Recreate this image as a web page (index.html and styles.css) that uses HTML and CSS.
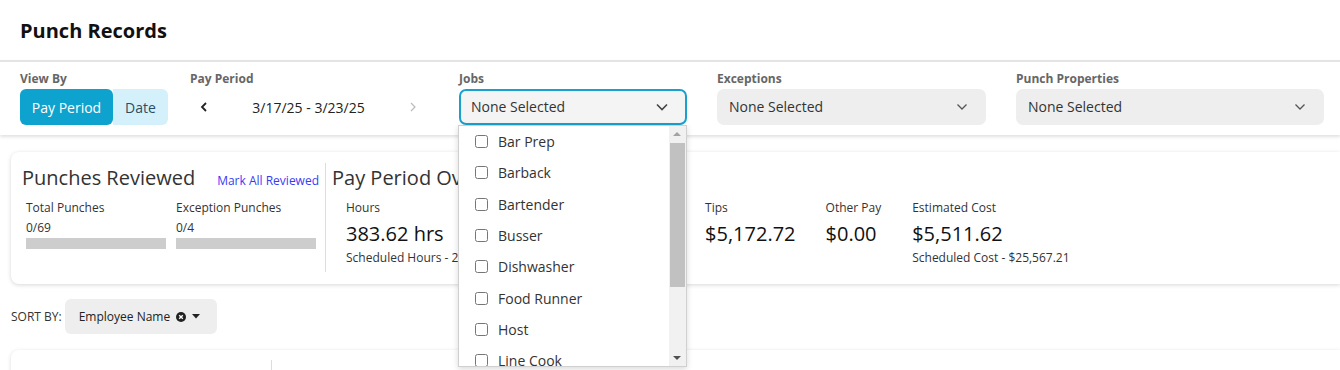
FILE: index.html
```html
<!DOCTYPE html>
<html lang="en">
<head>
    <meta charset="UTF-8">
    <meta name="viewport" content="width=device-width, initial-scale=1.0">
    <title>Punch Records</title>
    <link rel="stylesheet" href="styles.css">
</head>
<body>
    <header class="page-header">
        <h1>Punch Records</h1>
    </header>

    <!-- filters -->
    <div class="filter-bar">
        <div class="filter">
            <label>View By</label>
            <div class="toggle">
                <button class="toggle-btn active">Pay Period</button>
                <button class="toggle-btn">Date</button>
            </div>
        </div>

        <div class="filter">
            <label>Pay Period</label>
            <div class="period-nav">
                <button class="nav-btn">
                    <svg width="10" height="12" viewBox="0 0 10 12"><polyline points="7,2 3,6 7,10" fill="none" stroke="#222" stroke-width="1.8"/></svg>
                </button>
                <span class="period-range">3/17/25 - 3/23/25</span>
                <button class="nav-btn">
                    <svg width="10" height="12" viewBox="0 0 10 12"><polyline points="3,2 7,6 3,10" fill="none" stroke="#bbb" stroke-width="1.2"/></svg>
                </button>
            </div>
        </div>

        <div class="filter jobs">
            <label>Jobs</label>
            <div class="select open">
                <span>None Selected</span>
                <svg width="14" height="10" viewBox="0 0 14 10"><polyline points="2,2.5 7,7.5 12,2.5" fill="none" stroke="#444" stroke-width="1.6"/></svg>
            </div>
            <div class="dropdown">
                <ul class="options">
                    <li><input type="checkbox"> Bar Prep</li>
                    <li><input type="checkbox"> Barback</li>
                    <li><input type="checkbox"> Bartender</li>
                    <li><input type="checkbox"> Busser</li>
                    <li><input type="checkbox"> Dishwasher</li>
                    <li><input type="checkbox"> Food Runner</li>
                    <li><input type="checkbox"> Host</li>
                    <li><input type="checkbox"> Line Cook</li>
                </ul>
                <div class="scrollbar">
                    <span class="arrow up"></span>
                    <span class="thumb"></span>
                    <span class="arrow down"></span>
                </div>
            </div>
        </div>

        <div class="filter exceptions">
            <label>Exceptions</label>
            <div class="select">
                <span>None Selected</span>
                <svg width="12" height="8" viewBox="0 0 12 8"><polyline points="1.5,1.5 6,6 10.5,1.5" fill="none" stroke="#555" stroke-width="1.3"/></svg>
            </div>
        </div>

        <div class="filter props">
            <label>Punch Properties</label>
            <div class="select">
                <span>None Selected</span>
                <svg width="12" height="8" viewBox="0 0 12 8"><polyline points="1.5,1.5 6,6 10.5,1.5" fill="none" stroke="#555" stroke-width="1.3"/></svg>
            </div>
        </div>
    </div>

    <main>
        <div class="summary-card">
            <section class="reviewed">
                <div class="card-title-row">
                    <h2>Punches Reviewed</h2>
                    <a class="mark-all">Mark All Reviewed</a>
                </div>
                <div class="progress-row">
                    <div class="progress">
                        <div class="stat-label">Total Punches</div>
                        <div class="stat-count">0/69</div>
                        <div class="bar"></div>
                    </div>
                    <div class="progress">
                        <div class="stat-label">Exception Punches</div>
                        <div class="stat-count">0/4</div>
                        <div class="bar"></div>
                    </div>
                </div>
            </section>

            <section class="overview">
                <h2>Pay Period Overview</h2>
                <div class="stats">
                    <div class="stat hours">
                        <div class="stat-label">Hours</div>
                        <div class="stat-value">383.62 hrs</div>
                        <div class="stat-note">Scheduled Hours - 242.50 hrs</div>
                    </div>
                    <div class="stat wages">
                        <div class="stat-label">Wages</div>
                        <div class="stat-value">$338.90</div>
                    </div>
                    <div class="stat">
                        <div class="stat-label">Tips</div>
                        <div class="stat-value">$5,172.72</div>
                    </div>
                    <div class="stat other">
                        <div class="stat-label">Other Pay</div>
                        <div class="stat-value">$0.00</div>
                    </div>
                    <div class="stat">
                        <div class="stat-label">Estimated Cost</div>
                        <div class="stat-value">$5,511.62</div>
                        <div class="stat-note">Scheduled Cost - $25,567.21</div>
                    </div>
                </div>
            </section>
        </div>

        <div class="sort-row">
            <span class="sort-label">SORT BY:</span>
            <button class="sort-chip">
                Employee Name
                <svg width="10" height="10" viewBox="0 0 10 10"><circle cx="5" cy="5" r="5" fill="#222"/><path d="M3.2 3.2 L6.8 6.8 M6.8 3.2 L3.2 6.8" stroke="#fff" stroke-width="1.4"/></svg>
                <svg width="8" height="5" viewBox="0 0 8 5"><polygon points="0,0 8,0 4,4.5" fill="#222"/></svg>
            </button>
        </div>

        <div class="list-card">
            <div class="list-side"></div>
        </div>
    </main>
</body>
</html>
```

FILE: styles.css
```css
body {
    margin: 0;
    font-family: 'Open Sans', 'Segoe UI', sans-serif;
    color: #333;
    background: #fff;
    overflow: hidden;
}

.page-header {
    height: 60px;
    padding: 0 20px;
    display: flex;
    align-items: center;
}

.page-header h1 {
    margin: 0;
    font-size: 20px;
    font-weight: 700;
    color: #111;
}

.filter-bar {
    display: grid;
    grid-template-columns: 170px 269px 258px 299px 1fr;
    padding: 9px 16px 10px 20px;
    border-top: 2px solid #e4e4e4;
    box-shadow: 0 2px 3px rgba(0, 0, 0, 0.12);
    position: relative;
    z-index: 2;
    background: #fff;
}

.filter {
    position: relative;
}

.filter label {
    display: block;
    font-size: 12px;
    font-weight: 700;
    color: #666;
    line-height: 16px;
    margin-bottom: 2px;
}

.toggle {
    display: flex;
}

.toggle-btn {
    height: 36px;
    border: none;
    font-family: inherit;
    font-size: 14px;
    padding: 0 12px;
    white-space: nowrap;
    background: #d4f1fb;
    color: #2c4d63;
    border-radius: 0 6px 6px 0;
}

.toggle-btn.active {
    background: #0ea2cf;
    color: #fff;
    border-radius: 6px;
    width: 93px;
    padding: 0;
}

.period-nav {
    display: flex;
    align-items: center;
    width: 237px;
    height: 36px;
}

.nav-btn {
    width: 28px;
    height: 28px;
    border: none;
    background: none;
    padding: 0;
    display: flex;
    align-items: center;
    justify-content: center;
}

.period-range {
    flex: 1;
    text-align: center;
    font-size: 14px;
    color: #222;
}

.select {
    height: 36px;
    box-sizing: border-box;
    display: flex;
    align-items: center;
    justify-content: space-between;
    padding: 0 18px 1px 12px;
    background: #eee;
    border-radius: 7px;
    font-size: 14px;
    color: #333;
}

.jobs .select {
    width: 228px;
    background: #f4f4f4;
    border: 2px solid #1aa0cf;
    padding: 0 16px 1px 10px;
}

.exceptions .select {
    width: 269px;
}

.dropdown {
    position: absolute;
    top: 54px;
    left: -1px;
    width: 229px;
    height: 242px;
    box-sizing: border-box;
    background: #fff;
    border: 1px solid #d0d0d0;
    box-shadow: 0 2px 6px rgba(0, 0, 0, 0.15);
    overflow: hidden;
    z-index: 5;
}

.options {
    list-style: none;
    margin: 0;
    padding: 0 0 0 16px;
}

.options li {
    height: 31.3px;
    display: flex;
    align-items: center;
    gap: 10px;
    font-size: 14px;
    color: #333;
}

.options input {
    margin: 0;
    width: 13px;
    height: 13px;
}

.scrollbar {
    position: absolute;
    top: 0;
    right: 0;
    bottom: 0;
    width: 17px;
    background: #f1f1f1;
}

.scrollbar .thumb {
    position: absolute;
    left: 1px;
    right: 1px;
    top: 17px;
    height: 144px;
    background: #c1c1c1;
}

.scrollbar .arrow {
    position: absolute;
    left: 4px;
    width: 0;
    height: 0;
    border-left: 4px solid transparent;
    border-right: 4px solid transparent;
}

.scrollbar .up {
    top: 6px;
    border-bottom: 4px solid #a3a3a3;
}

.scrollbar .down {
    bottom: 6px;
    border-top: 4px solid #505050;
}

main {
    padding: 17px 0 0 11px;
}

.summary-card {
    display: flex;
    height: 132px;
    box-sizing: border-box;
    padding: 11px 0 12px 0;
    background: #fff;
    border-radius: 8px 0 0 8px;
    box-shadow: 0 1px 4px rgba(0, 0, 0, 0.16);
}

.reviewed {
    width: 315px;
    box-sizing: border-box;
    padding-left: 11px;
    padding-right: 6px;
    border-right: 1px solid #ddd;
}

.card-title-row {
    display: flex;
    justify-content: space-between;
    align-items: baseline;
}

h2 {
    margin: 0;
    font-size: 20px;
    font-weight: 400;
    color: #333;
    line-height: 30px;
}

.mark-all {
    font-size: 12px;
    color: #3a3af5;
}

.progress-row {
    display: flex;
    gap: 10px;
    padding-left: 4px;
    margin-top: 7px;
}

.progress {
    width: 140px;
}

.stat-label {
    font-size: 12px;
    line-height: 16px;
    color: #333;
}

.stat-count {
    font-size: 12px;
    line-height: 16px;
    margin-top: 4px;
}

.bar {
    height: 11px;
    background: #cdcdcd;
    margin-top: 2px;
}

.overview {
    padding-left: 6px;
}

.stats {
    display: flex;
    gap: 30px;
    padding-left: 14px;
    margin-top: 7px;
}

.stat-value {
    font-size: 20px;
    line-height: 27px;
    color: #111;
    margin-top: 4px;
}

.stat-note {
    font-size: 12px;
    line-height: 16px;
    margin-top: 3px;
    white-space: nowrap;
}

.wages {
    width: 135px;
}

.other {
    margin-right: 1px;
}

.sort-row {
    display: flex;
    align-items: center;
    gap: 3px;
    margin-top: 15px;
}

.sort-label {
    font-size: 12px;
    color: #333;
}

.sort-chip {
    height: 35px;
    width: 152px;
    border: none;
    border-radius: 6px;
    background: #eee;
    font-family: inherit;
    font-size: 12px;
    color: #222;
    display: flex;
    align-items: center;
    gap: 6px;
    padding: 0 0 0 14px;
}

.list-card {
    margin-top: 16px;
    height: 60px;
    background: #fff;
    border-radius: 8px 0 0 0;
    box-shadow: 0 1px 4px rgba(0, 0, 0, 0.14);
    padding-top: 10px;
    box-sizing: border-box;
}

.list-side {
    width: 260px;
    height: 100%;
    border-right: 1px solid #ddd;
}
```
